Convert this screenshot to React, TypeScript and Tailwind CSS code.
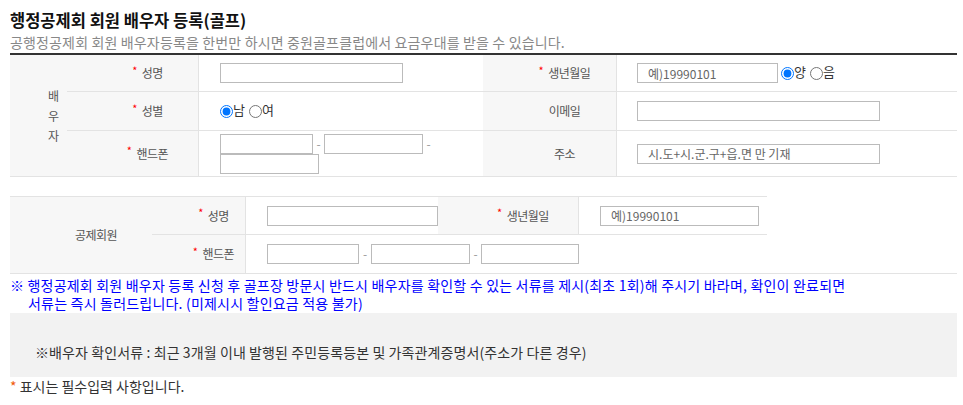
import React from "react";

const inputCls =
  "h-[20px] border border-[#bbb] bg-white px-[10px] text-[12px] text-[#333] outline-none placeholder:text-[#666]";

function Label({ children, req, w }: { children: React.ReactNode; req?: boolean; w: string }) {
  return (
    <div
      className={`${w} shrink-0 self-stretch bg-[#f7f7f7] border-r border-[#e3e3e3] pl-[30px] flex items-center justify-center text-[12px] text-[#555] tracking-[-0.5px]`}
    >
      {req && <span className="text-[#ff0000] text-[11px] mr-[5px] -mt-[6px]">*</span>}
      <span>{children}</span>
    </div>
  );
}

function Radio({ name, label, checked, first }: { name: string; label: string; checked?: boolean; first?: boolean }) {
  return (
    <label className={`flex items-center text-[13px] text-[#333] ${first ? "" : "ml-[4px]"}`}>
      <input type="radio" name={name} defaultChecked={checked} className="m-0 w-[13px] h-[13px]" />
      <span className="-mt-[2px]">{label}</span>
    </label>
  );
}

function Dash({ w }: { w: string }) {
  return <span className={`${w} text-center text-[12px] text-[#999]`}>-</span>;
}

export default function App() {
  return (
    <div className="w-[963px] h-[405px] bg-white font-['Noto_Sans_CJK_KR','Noto_Sans',sans-serif] overflow-hidden">
      <div className="ml-[10px] w-[947px]">
        <h2 className="pt-[10px] text-[16.5px] leading-[20px] font-bold text-[#111]">행정공제회 회원 배우자 등록(골프)</h2>
        <p className="mt-[3px] text-[14px] leading-[18px] text-[#888] tracking-[0.15px]">
          공행정공제회 회원 배우자등록을 한번만 하시면 중원골프클럽에서 요금우대를 받을 수 있습니다.
        </p>

        {/* Table 1 */}
        <div className="mt-[2px] flex border-t-2 border-t-[#333] border-b border-b-[#e3e3e3]">
          <div className="w-[57px] shrink-0 bg-[#f7f7f7] pl-[30px] flex items-center justify-center text-[12px] leading-[20px] text-[#555] text-center">
            <div>
              배<br />우<br />자
            </div>
          </div>
          <div className="flex-1 flex flex-col">
            <div className="h-[36px] flex items-center">
              <Label w="w-[132px]" req>성명</Label>
              <div className="w-[284px] shrink-0 pl-[21px] flex items-center">
                <input className={`${inputCls} w-[183px]`} />
              </div>
              <Label w="w-[134px]" req>생년월일</Label>
              <div className="flex-1 pl-[20px] flex items-center">
                <input className={`${inputCls} w-[141px]`} placeholder="예)19990101" />
                <div className="ml-[3px] flex items-center">
                  <Radio name="cal" label="양" checked first />
                  <Radio name="cal" label="음" />
                </div>
              </div>
            </div>
            <div className="h-[39px] border-t border-[#e3e3e3] flex items-center">
              <Label w="w-[132px]" req>성별</Label>
              <div className="w-[284px] shrink-0 pl-[21px] flex items-center">
                <Radio name="sex" label="남" checked first />
                <Radio name="sex" label="여" />
              </div>
              <Label w="w-[134px]">이메일</Label>
              <div className="flex-1 pl-[20px] flex items-center">
                <input className={`${inputCls} w-[243px]`} />
              </div>
            </div>
            <div className="h-[46px] border-t border-[#e3e3e3] flex items-center">
              <Label w="w-[132px]" req>핸드폰</Label>
              <div className="w-[284px] shrink-0 pl-[21px] flex flex-col">
                <div className="flex items-center">
                  <input className={`${inputCls} w-[93px]`} />
                  <Dash w="w-[11px]" />
                  <input className={`${inputCls} w-[99px]`} />
                  <Dash w="w-[11px]" />
                </div>
                <input className={`${inputCls} w-[99px]`} />
              </div>
              <Label w="w-[134px]">주소</Label>
              <div className="flex-1 pl-[20px] flex items-center">
                <input className={`${inputCls} w-[243px]`} placeholder="시.도+시.군.구+읍.면 만 기재" />
              </div>
            </div>
          </div>
        </div>

        {/* Table 2 */}
        <div className="mt-[19px] w-[757px] flex border-t border-[#e3e3e3]">
          <div className="w-[142px] shrink-0 bg-[#f7f7f7] pl-[30px] flex items-center justify-center text-[12px] text-[#555] tracking-[-0.5px]">
            공제회원
          </div>
          <div className="flex-1 flex flex-col">
            <div className="h-[37px] flex items-center">
              <Label w="w-[94px]" req>성명</Label>
              <div className="w-[192px] shrink-0 pl-[21px] flex items-center">
                <input className={`${inputCls} w-[171px]`} />
              </div>
              <Label w="w-[141px]" req>생년월일</Label>
              <div className="flex-1 pl-[21px] flex items-center">
                <input className={`${inputCls} w-[159px]`} placeholder="예)19990101" />
              </div>
            </div>
            <div className="h-[39px] border-t border-[#e3e3e3] flex items-center">
              <Label w="w-[94px]" req>핸드폰</Label>
              <div className="flex-1 pl-[21px] flex items-center">
                <input className={`${inputCls} w-[92px]`} />
                <Dash w="w-[12px]" />
                <input className={`${inputCls} w-[99px]`} />
                <Dash w="w-[11px]" />
                <input className={`${inputCls} w-[98px]`} />
              </div>
            </div>
          </div>
        </div>

        {/* Notice */}
        <div className="border-t border-[#e3e3e3] pt-[2px] text-[14px] leading-[18px] text-[#0000ff] tracking-[0.2px]">
          <div>※ 행정공제회 회원 배우자 등록 신청 후 골프장 방문시 반드시 배우자를 확인할 수 있는 서류를 제시(최초 1회)해 주시기 바라며, 확인이 완료되면</div>
          <div className="pl-[18px]">서류는 즉시 돌러드립니다. (미제시시 할인요금 적용 불가)</div>
        </div>
        <div className="mt-[1px] bg-[#f2f2f2] pt-[30px] pb-[16px] pl-[25px] text-[14px] leading-[18px] text-[#333] tracking-[0.1px]">
          ※배우자 확인서류 : 최근 3개월 이내 발행된 주민등록등본 및 가족관계증명서(주소가 다른 경우)
        </div>
        <div className="text-[14px] leading-[18px] text-[#333]">
          <span className="text-[#f05a0a]">*</span> 표시는 필수입력 사항입니다.
        </div>
      </div>
    </div>
  );
}
